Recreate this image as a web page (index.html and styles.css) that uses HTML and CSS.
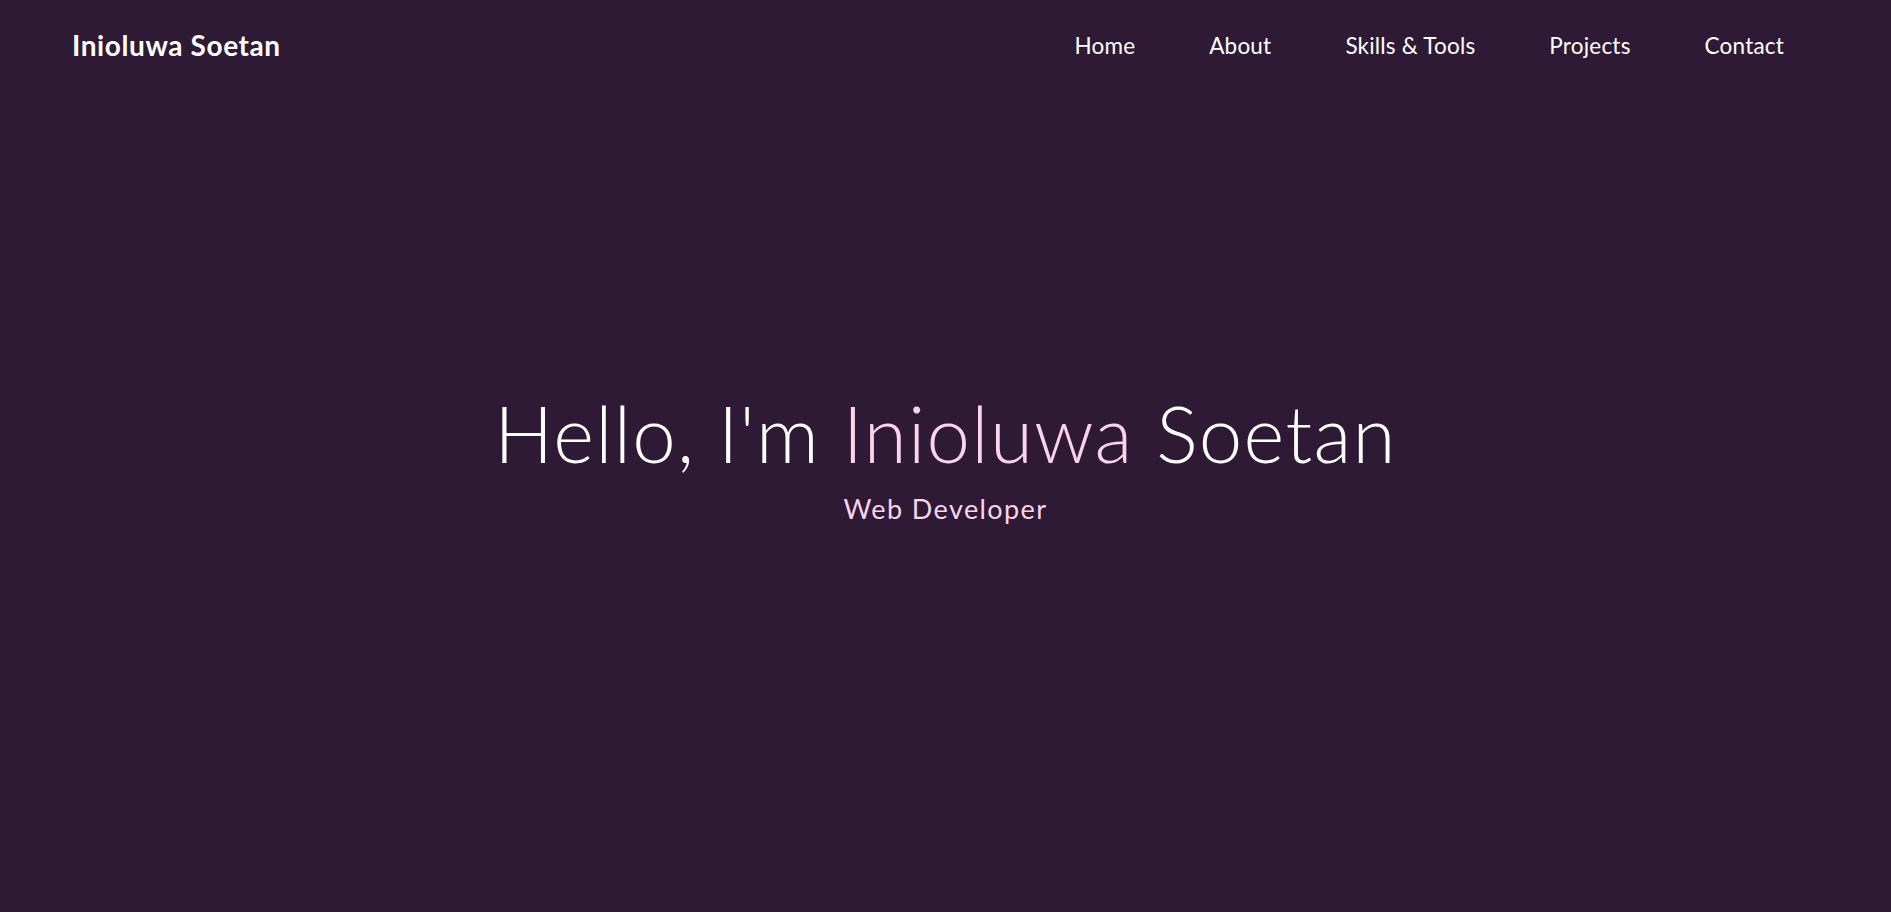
FILE: index.html
```html
<!DOCTYPE html>
<html lang="en">
<head>
<meta charset="utf-8">
<title>Inioluwa Soetan</title>
<link rel="stylesheet" href="styles.css">
</head>
<body>
<header class="header">
  <a class="logo" href="#">Inioluwa Soetan</a>
  <nav class="nav">
    <a href="#">Home</a>
    <a href="#">About</a>
    <a href="#">Skills &amp; Tools</a>
    <a href="#">Projects</a>
    <a href="#">Contact</a>
  </nav>
</header>
<main class="hero">
  <h1 class="hero-title">Hello, I'm <span class="accent">Inioluwa</span> Soetan</h1>
  <p class="hero-sub">Web Developer</p>
</main>
</body>
</html>
```
FILE: styles.css
```css
* { box-sizing: border-box; }
html, body { margin: 0; padding: 0; }
body {
  background: #2f1a35;
  color: #ffffff;
  font-family: "Lato", "Open Sans", sans-serif;
  height: 912px;
  overflow: hidden;
}
a { color: inherit; text-decoration: none; }
.header {
  display: flex;
  align-items: center;
  justify-content: space-between;
  height: 90px;
  padding: 0 107px 0 72px;
}
.logo {
  font-weight: 700;
  font-size: 28px;
  letter-spacing: 0.6px;
}
.nav {
  display: flex;
  gap: 74px;
  font-size: 22.5px;
  font-weight: 400;
  letter-spacing: 0.2px;
}
.hero {
  display: flex;
  flex-direction: column;
  align-items: center;
  padding-top: 304px;
}
.hero-title {
  margin: 0;
  font-weight: 300;
  font-size: 78px;
  letter-spacing: 1.3px;
  line-height: 1;
}
.accent { color: #fad4ea; }
.hero-sub {
  margin: 20px 0 0;
  font-size: 27px;
  letter-spacing: 1.4px;
  color: #fad4ea;
}
```
